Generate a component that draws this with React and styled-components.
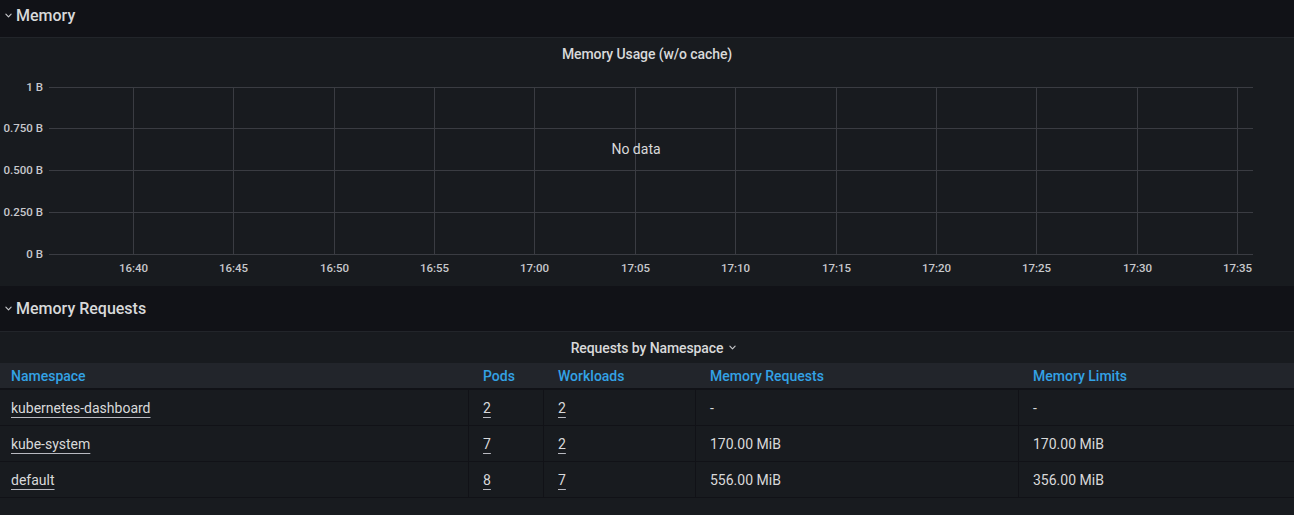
import React from "react";
import styled, { createGlobalStyle } from "styled-components";

const Global = createGlobalStyle`
  html, body { margin: 0; padding: 0; background: #111217; }
  body { font-family: Roboto, "Liberation Sans", sans-serif; color: #d8d9da; }
  * { box-sizing: border-box; }
`;

const Page = styled.div`
  width: 1294px;
  height: 515px;
  overflow: hidden;
  background: #111217;
  display: flex;
  flex-direction: column;
`;

const RowHeader = styled.div`
  height: ${(p) => p.$h}px;
  padding-bottom: ${(p) => p.$pb || 0}px;
  display: flex;
  align-items: center;
  gap: 4px;
  padding-left: 5px;
  font-size: 16px;
  font-weight: 500;
  color: #d8d9da;
  flex-shrink: 0;
`;

const Panel = styled.div`
  background: #181b1f;
  border-top: 1px solid #22252a;
  display: flex;
  flex-direction: column;
  flex-shrink: 0;
  height: ${(p) => (p.$h ? `${p.$h}px` : "auto")};
  flex-grow: ${(p) => (p.$grow ? 1 : 0)};
`;

const PanelTitle = styled.div`
  height: ${(p) => p.$h}px;
  display: flex;
  align-items: center;
  justify-content: center;
  gap: 6px;
  font-size: 14px;
  font-weight: 500;
  letter-spacing: -0.1px;
  color: #d8d9da;
  padding-left: ${(p) => p.$pl || 0}px;
`;

const ChartWrap = styled.div`
  position: relative;
  flex: 1;
`;

const NoData = styled.div`
  position: absolute;
  left: 636px;
  top: 79px;
  transform: translate(-50%, -50%);
  font-size: 14px;
  color: #d8d9da;
`;

const Table = styled.div`
  display: grid;
  grid-template-columns: 468px 75px 152px 323px 1fr;
`;

const HeadCell = styled.div`
  height: 27px;
  background: #22252b;
  border-bottom: 2px solid #111217;
  display: flex;
  align-items: center;
  padding-left: ${(p) => (p.$first ? 11 : 15)}px;
  font-size: 14px;
  font-weight: 500;
  color: #33a2e5;
`;

const Cell = styled.div`
  height: 36px;
  display: flex;
  align-items: center;
  padding-left: ${(p) => (p.$first ? 11 : 14)}px;
  border-left: ${(p) => (p.$first ? "none" : "1px solid #111217")};
  border-bottom: 1px solid #111217;
  font-size: 14px;
  color: #d8d9da;
`;

const Link = styled.span`
  text-decoration: underline;
  text-decoration-color: #b8b9c0;
  text-underline-offset: 4px;
  text-decoration-thickness: 1px;
`;

const Chevron = ({ size = 7 }) => (
  <svg width={size} height={5} viewBox="0 0 8 5" fill="none">
    <path d="M1 1 L4 4 L7 1" stroke="#c7c8cc" strokeWidth="1.3" strokeLinecap="round" strokeLinejoin="round" />
  </svg>
);

const yTicks = [
  { label: "1 B", y: 17 },
  { label: "0.750 B", y: 58 },
  { label: "0.500 B", y: 100 },
  { label: "0.250 B", y: 142 },
  { label: "0 B", y: 184 },
];
const xLabels = ["16:40", "16:45", "16:50", "16:55", "17:00", "17:05", "17:10", "17:15", "17:20", "17:25", "17:30", "17:35"];

const Chart = () => (
  <svg width="1294" height="215" style={{ display: "block" }}>
    {yTicks.map((t) => (
      <g key={t.label}>
        <line x1="49" x2="1253" y1={t.y + 0.5} y2={t.y + 0.5} stroke="#3a3c42" strokeWidth="1" />
        <text x="43" y={t.y + 4} textAnchor="end" fontSize="11.5" fontWeight="500" fill="#c7c8cc" fontFamily="Roboto, sans-serif">
          {t.label}
        </text>
      </g>
    ))}
    {xLabels.map((l, i) => {
      const x = Math.round(133 + i * 100.36) + 0.5;
      return (
        <g key={l}>
          <line x1={x} x2={x} y1="17" y2="184" stroke="#3a3c42" strokeWidth="1" />
          <text x={x} y="202" textAnchor="middle" fontSize="11.5" fontWeight="500" fill="#c7c8cc" fontFamily="Roboto, sans-serif">
            {l}
          </text>
        </g>
      );
    })}
  </svg>
);

const rows = [
  { ns: "kubernetes-dashboard", pods: "2", wl: "2", req: "-", lim: "-" },
  { ns: "kube-system", pods: "7", wl: "2", req: "170.00 MiB", lim: "170.00 MiB" },
  { ns: "default", pods: "8", wl: "7", req: "556.00 MiB", lim: "356.00 MiB" },
];

export default function App() {
  return (
    <>
      <Global />
      <Page>
        <RowHeader $h={37} $pb={6}>
          <Chevron />
          Memory
        </RowHeader>
        <Panel $h={249}>
          <PanelTitle $h={32}>Memory Usage (w/o cache)</PanelTitle>
          <ChartWrap>
            <Chart />
            <NoData>No data</NoData>
          </ChartWrap>
        </Panel>
        <RowHeader $h={45}>
          <Chevron />
          Memory Requests
        </RowHeader>
        <Panel $grow>
          <PanelTitle $h={31} $pl={13}>
            Requests by Namespace
            <Chevron />
          </PanelTitle>
          <Table>
            <HeadCell $first>Namespace</HeadCell>
            <HeadCell>Pods</HeadCell>
            <HeadCell>Workloads</HeadCell>
            <HeadCell>Memory Requests</HeadCell>
            <HeadCell>Memory Limits</HeadCell>
            {rows.map((r) => (
              <React.Fragment key={r.ns}>
                <Cell $first>
                  <Link>{r.ns}</Link>
                </Cell>
                <Cell>
                  <Link>{r.pods}</Link>
                </Cell>
                <Cell>
                  <Link>{r.wl}</Link>
                </Cell>
                <Cell>{r.req}</Cell>
                <Cell>{r.lim}</Cell>
              </React.Fragment>
            ))}
          </Table>
        </Panel>
      </Page>
    </>
  );
}
